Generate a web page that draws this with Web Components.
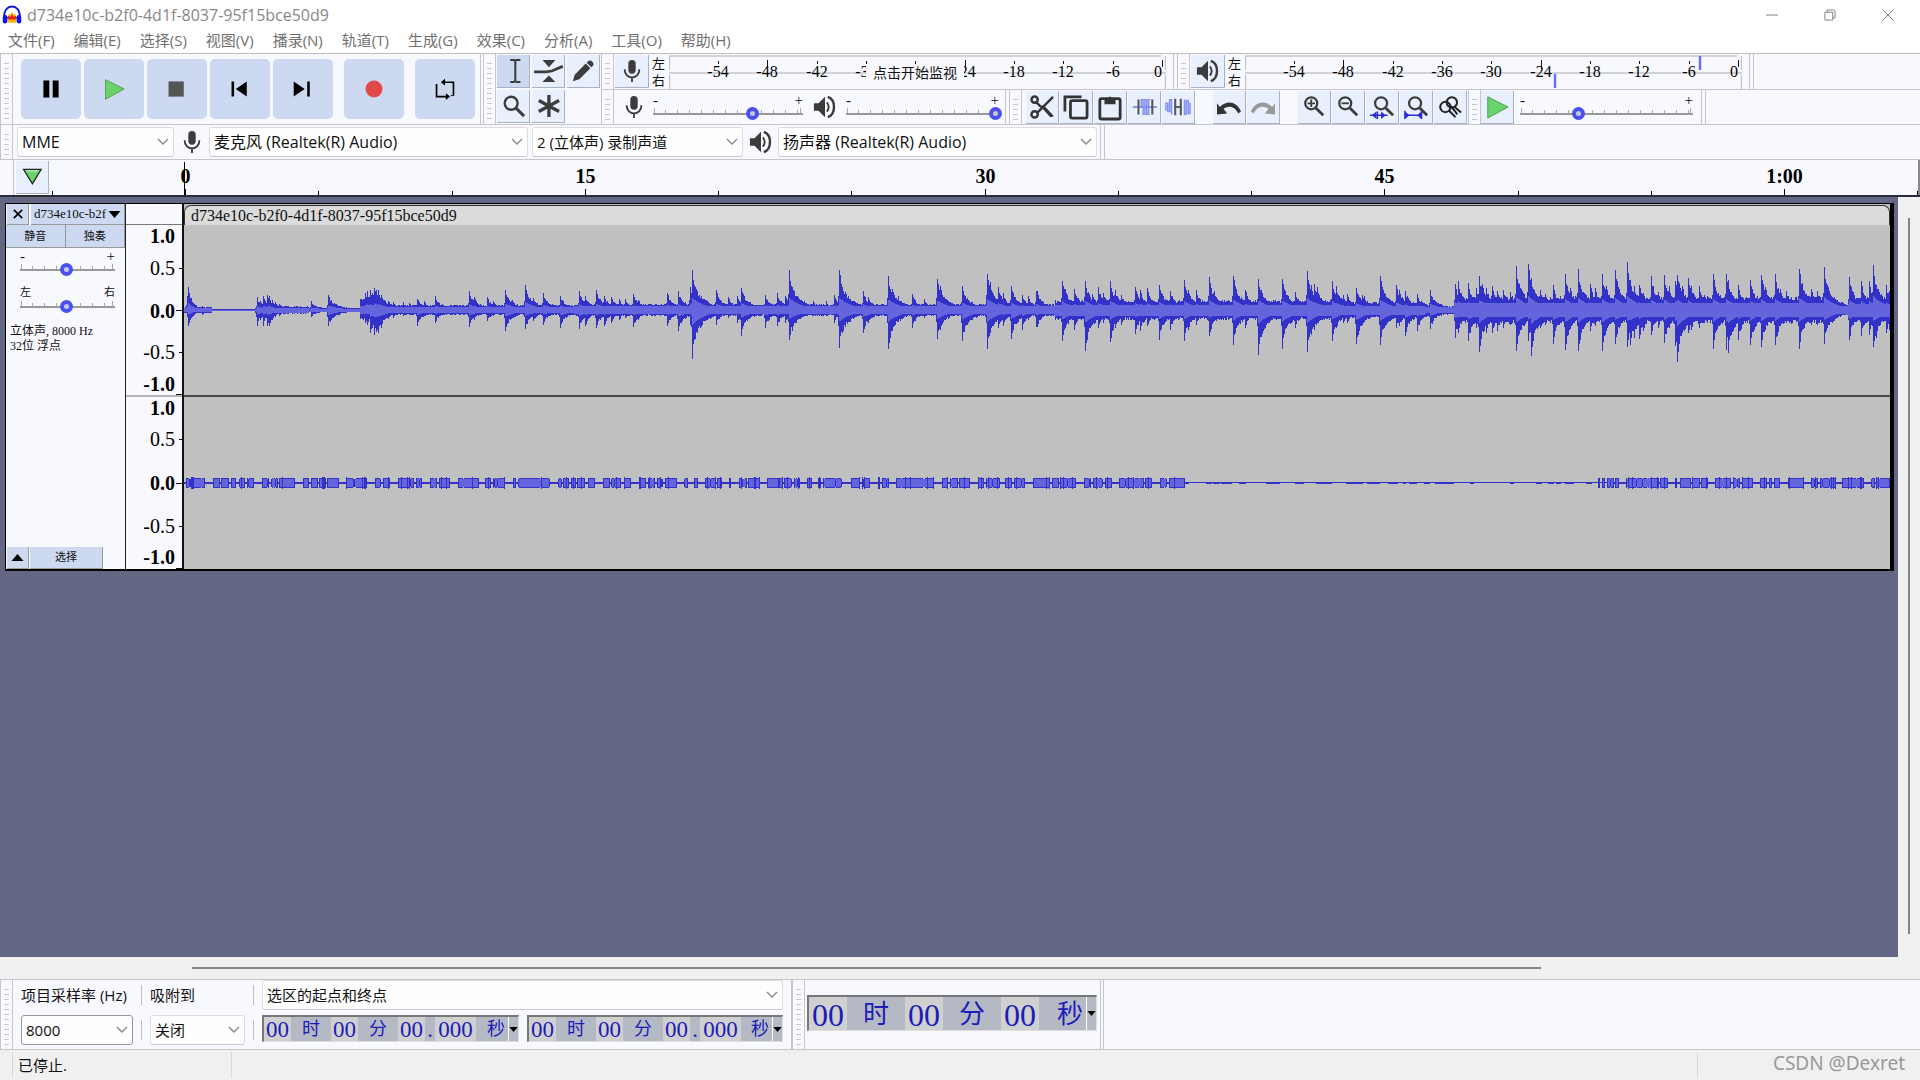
<!DOCTYPE html>
<html lang="zh-CN">
<head>
<meta charset="utf-8">
<title>d734e10c-b2f0-4d1f-8037-95f15bce50d9</title>
<style>
    html, body {
        margin: 0;
        height: 100%;
    }
    body {
        --panel: #f8f8ff;
        --line: #c6c6ca;
        --button: #ccd9f0;
        --ui: "Open Sans", "Noto Sans CJK SC", sans-serif;
        --song: "Liberation Serif", "Noto Sans CJK SC", serif;
        font: 15px/20px var(--ui);
        color: #111;
        overflow: hidden;
    }
</style>
</head>
<body>
<audio-window></audio-window>

<script>
const define = (name, html, setup) => {
    const template = document.createElement('template')
    template.innerHTML = html
    customElements.define(name, class extends HTMLElement {
        constructor() {
            super()
            this.attachShadow({ mode: 'open' })
            this.shadowRoot.appendChild(template.content.cloneNode(true))
        }
        connectedCallback() {
            if (setup) setup(this, this.shadowRoot)
        }
    })
}

const magnifier = '<circle cx="10" cy="9" r="6.5" fill="none" stroke="#3c3c3c" stroke-width="2.4"/><path d="M15 14l8 8" stroke="#3c3c3c" stroke-width="3"/>'

// every icon is drawn on a 26 x 26 grid
const icons = {
    logo: '<path d="M3 17C2 6 8 2 13 2s11 4 10 15" fill="none" stroke="#0a14d8" stroke-width="2.4"/><path d="M7 17l2-6 2 2 2-4 2 4 2-2 2 6-1 6H8z" fill="#ffb400"/><path d="M6 17l3-3 2 2 2-5 2 5 2-2 3 3-3 2H9z" fill="#f02010"/><rect x="1" y="13" width="6" height="11" rx="3" fill="#0a14f0"/><rect x="19" y="13" width="6" height="11" rx="3" fill="#0a14f0"/>',
    pause: '<path d="M4 3h7v20H4zM15 3h7v20h-7z"/>',
    play: '<path d="M3 2l22 11L3 25z" fill="#6bd36b" stroke="#4a9a4a"/>',
    stop: '<path d="M3 4h18v18H3z" fill="#555"/>',
    start: '<path d="M3 4h3v18H3zM21 4v18L8 13z"/>',
    end: '<path d="M18 4h3v18h-3zM2 4v18l13-9z"/>',
    record: '<circle cx="13" cy="13" r="10" fill="#e24848"/>',
    loop: '<path d="M3 7v15h13M10 5h13v16M3 22h4M23 5h-4M16 22h-3" fill="none" stroke="#000" stroke-width="2"/><path d="M8 5l5-4v8zM19 22l-5-4v8zM23 20h-3v2z"/>',
    select: '<path d="M10 1h4l1.5 1L17 1h4M15.500 2v22M10 25h4l1.500-1 1.500 1h4" fill="none" stroke="#3c3c3c" stroke-width="2.2"/>',
    envelope: '<path d="M7 1h14l-7 8zM7 25h14l-7-7z" fill="#3c3c3c"/><path d="M-2 14h13l6-1 12-5" fill="none" stroke="#3c3c3c" stroke-width="3"/>',
    draw: '<path d="M2 24l2-7L16 5l5 5L9 22zM17 4l2-2q1-1 3 0l2 2q1 2 0 3l-2 2z" fill="#3c3c3c"/>',
    zoom: '<circle cx="11" cy="10" r="7" fill="none" stroke="#3c3c3c" stroke-width="2.600"/><path d="M16 15l9 9" stroke="#3c3c3c" stroke-width="3.200"/>',
    multi: '<path d="M14 1v24M3 7l22 12M25 7L3 19" stroke="#3c3c3c" stroke-width="3.6"/>',
    mic: '<rect x="9" y="1" width="8" height="15" rx="4" fill="#3c3c3c"/><path d="M5 11c0 12 16 12 16 0M13 20v5" fill="none" stroke="#3c3c3c" stroke-width="2"/>',
    speaker: '<path d="M1 9h5l7-7v22l-7-7H1z" fill="#3c3c3c"/><path d="M15 8q4 5 0 10" fill="none" stroke="#3c3c3c" stroke-width="2"/><path d="M16 2c9 3 9 19 0 22" fill="none" stroke="#3c3c3c" stroke-width="2.6"/>',
    cut: '<g fill="none" stroke="#333" stroke-width="2.6"><circle cx="5" cy="5" r="3.4"/><circle cx="5" cy="21" r="3.4"/><path d="M7 8l5 5M8 19L25 2" /></g><path d="M11 12l4-1 11 12-4 1z" fill="#333"/>',
    copy: '<path d="M1 18V2h18" fill="none" stroke="#333" stroke-width="3"/><rect x="7" y="6" width="18" height="19" rx="2" fill="none" stroke="#333" stroke-width="3"/>',
    paste: '<rect x="2" y="4" width="22" height="22" rx="2" fill="none" stroke="#333" stroke-width="3"/><path d="M7 4h4q2-5 4 0h4v6H7z" fill="#333"/>',
    trim: '<path d="M1 13h26" stroke="#7f8ff0" stroke-width="2"/><path d="M10 13V5h2v16h2V5h2v16h2V5h2" fill="none" stroke="#8090f0" stroke-width="1.6"/><path d="M7 5v16M22 5v16" stroke="#555" stroke-width="2.2"/>',
    silence: '<path d="M0 17V9h2v9h2V5h2v16M20 5v16h2V6h2v14h2V8" fill="none" stroke="#8090f0" stroke-width="1.6"/><path d="M9 13h8" stroke="#555" stroke-width="2"/><path d="M10 4v18M16 4v18" stroke="#555" stroke-width="2.2"/>',
    undo: '<path d="M0 9l3 4C10 6 21 6 26 18l-3 2C19 12 13 11 7 15l4 5L0 21z" fill="#333"/>',
    redo: '<path d="M26 9l-3 4C16 6 5 6 0 18l3 2c4-8 10-9 16-5l-4 5 11 1z" fill="#999"/>',
    zoomin: magnifier + '<path d="M6 9h8M10 5v8" stroke="#3c3c3c" stroke-width="2"/>',
    zoomout: magnifier + '<path d="M6 9h8" stroke="#3c3c3c" stroke-width="2"/>',
    zoomsel: '<g transform="translate(2)">' + magnifier + '</g><path d="M0 22h19M8 18v8" stroke="#2c2cd0" stroke-width="1.6"/><path d="M2 22l5-4v8zM17 22l-5-4v8z" fill="#2c2cd0"/>',
    zoomfit: '<g transform="translate(2)">' + magnifier + '</g><path d="M1 22h18M1 17v9M19 17v9" stroke="#2c2cd0" stroke-width="1.6"/><path d="M1 18l5 4-5 4zM19 18l-5 4 5 4z" fill="#2c2cd0"/>',
    toggle: '<g fill="none" stroke="#222" stroke-width="2.2"><circle cx="15" cy="8" r="5.6"/><circle cx="8" cy="13" r="5.6"/><path d="M18 13l7 6M12 17l7 7M14 12l7 9"/></g>',
    pin: '<path d="M2 3h23L13.500 22z" fill="#6bd36b" stroke="#222" stroke-width="1.6"/><path d="M6 5h15" stroke="#c5f2c0" stroke-width="1.4"/>',
    close: '<path d="M4 4l18 18M22 4L4 22" stroke="#000" stroke-width="3.6"/>',
    down: '<path d="M1 6h24L13 20z"/>',
    up: '<path d="M1 20h24L13 6z"/>',
    min: '<path d="M0 13h26" stroke="#777" stroke-width="2"/>',
    restore: '<path d="M2 7h17v17H2zM7 7V2h12q5 0 5 5v12h-5" fill="none" stroke="#777" stroke-width="2"/>',
    exit: '<path d="M1 1l24 24M25 1L1 25" stroke="#777" stroke-width="2"/>'
}

define('ui-icon', `
    <style>
        :host { display: block; width: var(--size, 24px); height: var(--size, 24px); flex: none; }
        svg { display: block; width: 100%; height: 100%; overflow: visible; }
    </style>
    <svg viewBox="0 0 26 26" aria-hidden="true"></svg>
`, (host, root) => {
    root.querySelector('svg').innerHTML = icons[host.getAttribute('name')]
})

define('tool-button', `
    <style>
        :host { display: block; width: 33px; height: 33px; flex: none; }
        button {
            display: grid;
            place-content: center;
            width: 100%;
            height: 100%;
            box-sizing: border-box;
            padding: 0;
            border: 0 solid #a9b1c6;
            border-width: 0 1px 1px 0;
            background: #e9f0fd;
        }
        :host([wide]) { width: 34px; }
        :host([pressed]) button { background: var(--button); }
        :host([big]) { width: 60px; height: 60px; --size: 22px; }
        :host([big]) button { border: 0; border-radius: 5px; background: var(--button); }
    </style>
    <button type="button"></button>
`, (host, root) => {
    const button = root.querySelector('button')
    button.innerHTML = `<ui-icon name="${host.getAttribute('icon')}"></ui-icon>`
    button.setAttribute('aria-label', host.getAttribute('label'))
})

define('tool-bar', `
    <style>
        :host {
            display: flex;
            box-sizing: border-box;
            border: 0 solid var(--line);
            border-width: 0 1px;
            background: var(--panel);
        }
        .grip {
            width: 12px;
            flex: none;
            border-right: 1px solid var(--line);
            padding: 5px 3px 4px;
            box-sizing: border-box;
            background: repeating-linear-gradient(transparent 0 4px, #c8c8c8 4px 5px) content-box;
        }
        .body { display: flex; align-items: center; flex: 1; }
    </style>
    <div class="grip"></div>
    <div class="body"><slot></slot></div>
`)

define('level-slider', `
    <style>
        :host { display: block; width: 150px; flex: none; font: 15px/12px var(--song); }
        .ends { display: flex; justify-content: space-between; }
        .track {
            height: 14px;
            background:
                linear-gradient(#999, #999) 0 7px / 100% 2px no-repeat,
                linear-gradient(#aaa, #aaa) 1px 2px / 1px 5px no-repeat,
                linear-gradient(#aaa, #aaa) calc(100% - 2px) 2px / 1px 5px no-repeat,
                repeating-linear-gradient(90deg, transparent 0 11px, #aaa 11px 12px) 1px 4px / 100% 3px no-repeat;
        }
        input {
            appearance: none;
            display: block;
            width: calc(100% + 6px);
            height: 14px;
            margin: 0 -3px;
            background: none;
        }
        input::-webkit-slider-thumb {
            appearance: none;
            width: 13px;
            height: 13px;
            border: 4px solid #4a50ee;
            border-radius: 50%;
            background: #c8c8d8;
            box-sizing: border-box;
        }
    </style>
    <div class="ends"><span id="low"></span><span id="high"></span></div>
    <div class="track"><input type="range"></div>
`, (host, root) => {
    root.getElementById('low').textContent = host.getAttribute('low') || '-'
    root.getElementById('high').textContent = host.getAttribute('high') || '+'
    const input = root.querySelector('input')
    input.value = host.getAttribute('value')
    input.setAttribute('aria-label', host.getAttribute('label'))
})

define('drop-down', `
    <style>
        :host { display: grid; height: 30px; flex: none; align-items: center; }
        select {
            grid-area: 1 / 1;
            appearance: none;
            width: 100%;
            height: 100%;
            box-sizing: border-box;
            border: 1px solid #dcdce0;
            border-bottom-color: #c8c8cc;
            border-radius: 3px;
            background: #fefefe;
            padding: 0 0 1px 4px;
            color: #111;
            font: 15px/20px var(--ui);
        }
        :host([device]) select { font-size: 16px; }
        :host([strong]) select { border-color: #999; }
        svg {
            grid-area: 1 / 1;
            justify-self: end;
            margin-right: 5px;
            pointer-events: none;
        }
    </style>
    <select></select>
    <svg width="12" height="8" viewBox="0 0 12 8" fill="none" stroke="#888" stroke-width="1.4"><path d="M1 1l5 5 5-5"/></svg>
`, (host, root) => {
    const select = root.querySelector('select')
    select.add(new Option(host.getAttribute('value')))
    select.setAttribute('aria-label', host.getAttribute('label'))
})

define('level-meter', `
    <style>
        :host { display: flex; align-items: center; gap: 3px; font: 13px/17px var(--ui); }
        .sides { width: 14px; display: grid; }
        svg { display: block; width: 497px; height: 34px; font: 16px var(--song); }
        .scale { position: relative; }
        .hint {
            display: grid;
            place-items: center;
            width: 98px;
            height: 15px;
            background: var(--panel);
            font: 14px/14px var(--ui);
            position: absolute;
            left: 197px;
            top: 11px;
        }
        .hint:empty { display: none; }
    </style>
    <slot></slot>
    <div class="sides"><span>左</span><span>右</span></div>
    <div class="scale">
        <svg></svg>
        <div class="hint"></div>
    </div>
`, (host, root) => {
    const hint = host.getAttribute('hint') || ''
    let marks = '<path d="M0 1h492M0 18h497M.5 1v14M.5 20v14M496.5 1v14M496.5 20v14" stroke="#c6c6ca" stroke-width="1.4" fill="none"/>'
    for (let db = -54; db <= 0; db += 6) {
        const x = Math.round(493 + db * 8.22)
        marks += `<path d="M${x + .5} ${db % 24 ? 6 : 5}v${db % 24 ? 3 : 7}" stroke="#111"/>`
        // the hint box lies right over -30
        if (hint && db === -30) continue
        marks += `<text x="${db ? x : x - 4}" y="22" text-anchor="middle">${db}</text>`
    }
    if (host.hasAttribute('peaks')) {
        marks += '<path d="M455 1v14M310 19v14" stroke="#6a6aff" stroke-width="2.4"/>'
    }
    root.querySelector('svg').innerHTML = marks
    root.querySelector('.hint').textContent = hint
})

define('title-bar', `
    <style>
        :host { display: flex; align-items: center; gap: 5px; height: 29px; padding: 0 26px 0 2px; background: #fff; color: #888; --size: 20px; }
        h1 { flex: 1; margin: 0; font: 16px/20px var(--ui); }
        .buttons { display: flex; gap: 46px; --size: 12px; }
        button { border: 0; padding: 0; background: none; }
    </style>
    <ui-icon name="logo"></ui-icon>
    <h1>d734e10c-b2f0-4d1f-8037-95f15bce50d9</h1>
    <div class="buttons">
        <button aria-label="最小化"><ui-icon name="min"></ui-icon></button>
        <button aria-label="还原"><ui-icon name="restore"></ui-icon></button>
        <button aria-label="关闭"><ui-icon name="exit"></ui-icon></button>
    </div>
`)

define('menu-bar', `
    <style>
        :host { display: block; height: 24px; background: #fff; border-bottom: 1px solid #bebebe; }
        nav { display: flex; gap: 19px; padding-left: 8px; }
        button { border: 0; padding: 0; background: none; color: #707070; font: 15px/23px var(--ui); white-space: nowrap; }
    </style>
    <nav></nav>
`, (host, root) => {
    const items = ['文件(F)', '编辑(E)', '选择(S)', '视图(V)', '播录(N)', '轨道(T)', '生成(G)', '效果(C)', '分析(A)', '工具(O)', '帮助(H)']
    root.querySelector('nav').innerHTML = items.map(item => `<button>${item}</button>`).join('')
})

define('tool-dock', `
    <style>
        :host { display: block; background: var(--panel); }
        .top { display: flex; height: 71px; border-bottom: 1px solid var(--line); box-sizing: border-box; }
        .transport { padding-right: 5px; margin-right: 2px; }
        .transport tool-button { margin-right: 3px; }
        .transport tool-button:first-child { margin-left: 8px; }
        .transport tool-button[gap] { margin-left: 8px; }
        .transport tool-button:last-child { margin-right: 0; }
        .tools { border-right: 0; }
        .grid { display: grid; grid-template-columns: repeat(3, 33px); gap: 2px; padding: 0 1px; }
        .rows { display: grid; grid-template-rows: 35px 35px; flex: 1; }
        .row { display: flex; gap: 3px; }
        .row + .row { border-top: 1px solid var(--line); }
        .meter { padding-right: 7px; }
        level-meter { margin-left: 1px; }
        .mixer { padding-right: 6px; }
        .pad { display: grid; place-items: center; width: 39px; }
        .pad.wide { width: 43px; }
        .edit-bar { border-right: 0; }
        .edit { gap: 1px; display: flex; padding-left: 4px; }
        .edit [gap] { margin-left: 17px; }
        .second { width: 153px; }
        .speed { padding-right: 8px; margin-left: -2px; }
        .speed level-slider { width: 173px; margin-left: 6px; }
        .rest { border-left: 1px solid var(--line); flex: 1; }
        .devices { display: flex; gap: 3px; height: 34px; border-bottom: 1px solid var(--line); }
        .devices .icon { display: grid; place-items: center; width: 35px; }
        .mme { width: 157px; margin-left: 4px; }
        .input { width: 319px; }
        .channels { width: 211px; margin-left: 4px; }
        .output { width: 319px; margin-right: 3px; }
    </style>
    <div class="top">
        <tool-bar class="transport">
            <tool-button big icon="pause" label="暂停"></tool-button>
            <tool-button big icon="play" label="播放"></tool-button>
            <tool-button big icon="stop" label="停止"></tool-button>
            <tool-button big icon="start" label="跳至开头"></tool-button>
            <tool-button big icon="end" label="跳至结尾"></tool-button>
            <tool-button big gap icon="record" label="录制"></tool-button>
            <tool-button big gap icon="loop" label="循环"></tool-button>
        </tool-bar>
        <tool-bar class="tools">
            <div class="grid">
                <tool-button pressed icon="select" label="选择工具"></tool-button>
                <tool-button icon="envelope" label="包络工具"></tool-button>
                <tool-button icon="draw" label="绘制工具"></tool-button>
                <tool-button icon="zoom" label="缩放工具"></tool-button>
                <tool-button icon="multi" label="多功能工具"></tool-button>
            </div>
        </tool-bar>
        <div class="rows">
            <div class="row">
                <tool-bar class="meter">
                    <level-meter hint="点击开始监视"><tool-button wide icon="mic" label="录制电平"></tool-button></level-meter>
                </tool-bar>
                <tool-bar class="meter">
                    <level-meter peaks><tool-button wide icon="speaker" label="播放电平"></tool-button></level-meter>
                </tool-bar>
                <div class="rest"></div>
            </div>
            <div class="row">
                <tool-bar class="mixer">
                    <div class="pad"><ui-icon name="mic"></ui-icon></div>
                    <level-slider value="67" label="录制音量"></level-slider>
                    <div class="pad wide"><ui-icon name="speaker"></ui-icon></div>
                    <level-slider class="second" value="100" label="播放音量"></level-slider>
                </tool-bar>
                <tool-bar class="edit-bar">
                    <div class="edit">
                        <tool-button icon="cut" label="剪切"></tool-button>
                        <tool-button icon="copy" label="复制"></tool-button>
                        <tool-button icon="paste" label="粘贴"></tool-button>
                        <tool-button icon="trim" label="修剪"></tool-button>
                        <tool-button icon="silence" label="静音"></tool-button>
                        <tool-button gap icon="undo" label="撤销"></tool-button>
                        <tool-button icon="redo" label="重做"></tool-button>
                        <tool-button gap icon="zoomin" label="放大"></tool-button>
                        <tool-button icon="zoomout" label="缩小"></tool-button>
                        <tool-button icon="zoomsel" label="缩放到选区"></tool-button>
                        <tool-button icon="zoomfit" label="缩放到项目"></tool-button>
                        <tool-button icon="toggle" label="切换缩放"></tool-button>
                    </div>
                </tool-bar>
                <tool-bar class="speed">
                    <tool-button icon="play" label="以指定速度播放"></tool-button>
                    <level-slider value="33" label="播放速度"></level-slider>
                </tool-bar>
                <div class="rest"></div>
            </div>
        </div>
    </div>
    <div class="devices">
        <tool-bar>
            <drop-down device class="mme" value="MME" label="音频主机"></drop-down>
            <div class="icon"><ui-icon name="mic"></ui-icon></div>
            <drop-down device class="input" value="麦克风 (Realtek(R) Audio)" label="录制设备"></drop-down>
            <drop-down class="channels" value="2 (立体声) 录制声道" label="录制声道"></drop-down>
            <div class="icon"><ui-icon name="speaker"></ui-icon></div>
            <drop-down device class="output" value="扬声器 (Realtek(R) Audio)" label="播放设备"></drop-down>
        </tool-bar>
        <div class="rest"></div>
    </div>
`)

define('time-ruler', `
    <style>
        :host { display: flex; height: 35px; background: var(--panel); border-bottom: 2px solid #2b2c38; }
        .gap { width: 13px; border-right: 1px solid var(--line); }
        .pin { margin: 1px 0 0 2px; --size: 20px; }
        svg { flex: 1; min-width: 0; height: 35px; font: bold 20px var(--song); border-right: 2px solid #888; }
    </style>
    <div class="gap"></div>
    <tool-button class="pin" icon="pin" label="固定播放头"></tool-button>
    <svg></svg>
`, (host, root) => {
    // the svg starts 49px from the window edge, second 0 is at 185px
    const names = { 0: '0', 15: '15', 30: '30', 45: '45', 60: '1:00' }
    let marks = '<path d="M135.5 2v33" stroke="#000"/>'
    for (let s = -5; s <= 65; s += 5) {
        const x = Math.round(136 + s * 26.65) + .5
        marks += `<path d="M${x} ${s in names ? 29 : 31}v6" stroke="#000"/>`
        if (s in names) marks += `<text x="${x}" y="23" text-anchor="middle">${names[s]}</text>`
    }
    root.querySelector('svg').innerHTML = marks
})

define('track-panel', `
    <style>
        :host { display: flex; flex-direction: column; background: var(--panel); border-right: 1px solid #222; font: 12px/15px var(--song); }
        button {
            border: 0 solid #999;
            border-width: 0 1px 1px 0;
            padding: 0;
            background: var(--button);
            color: #111;
            font: 11px/15px var(--song);
            display: flex;
            align-items: center;
            justify-content: center;
            gap: 2px;
            box-sizing: border-box;
        }
        .row { display: grid; height: 21px; }
        .name { grid-template-columns: 22px 1fr; gap: 2px; --size: 12px; margin-left: 1px; }
        .name ui-icon[name=down] { --size: 13px; }
        .name button { font: 13px/16px var(--song); }
        .mute { grid-template-columns: 1fr 1fr; height: 23px; }
        level-slider { width: 95px; margin: 2px 0 0 14px; }
        .pan { font: 11px/14px var(--song); margin-top: 9px; }
        p { margin: 11px 0 0 4px; }
        .foot { margin-top: auto; grid-template-columns: 22px 73px; gap: 1px; height: 22px; --size: 13px; margin-left: 1px; }
    </style>
    <div class="row name">
        <button aria-label="关闭轨道"><ui-icon name="close"></ui-icon></button>
        <button>d734e10c-b2f<ui-icon name="down"></ui-icon></button>
    </div>
    <div class="row mute"><button>静音</button><button>独奏</button></div>
    <level-slider value="49" label="增益"></level-slider>
    <level-slider class="pan" value="49" low="左" high="右" label="声像"></level-slider>
    <p>立体声, 8000 Hz<br>32位 浮点</p>
    <div class="row foot">
        <button aria-label="折叠"><ui-icon name="up"></ui-icon></button>
        <button>选择</button>
    </div>
`)

define('amplitude-ruler', `
    <style>
        :host { display: block; background: var(--panel); border-right: 2px solid #111; }
        svg { display: block; width: 56px; height: 365px; overflow: visible; font: 20px var(--song); }
        .b { font-weight: bold; }
    </style>
    <svg></svg>
`, (host, root) => {
    const marks = [['1.0', 32, 0], ['0.5', 64, 64], ['0.0', 107, 106], ['-0.5', 148, 148], ['-1.0', 180, 190],
        ['1.0', 204, 0], ['0.5', 235, 235], ['0.0', 279, 279], ['-0.5', 322, 322], ['-1.0', 353, 364]]
    root.querySelector('svg').innerHTML = '<path d="M0 20.5h56M0 192h56" stroke="#777"/>' + marks.map(([label, y, tick]) => {
        const half = label.endsWith('5')
        return `<text class="${half ? '' : 'b'}" x="49" y="${y + 7}" text-anchor="end">${label}</text>` +
            (tick ? `<path d="M${half ? 53 : 50} ${tick + .5}H56" stroke="#111"/>` : '')
    }).join('')
})

// Peaks are [x, top, bottom] triples on a fine grid: x is divided by the rate
// of its chunk, heights are in thirds of a pixel round the zero line at 331.
const music = [
    { from: -5, rate: 2.613, peaks: [[20,290,350],[24,262,380],[60,318,345],[205,293,380],[212,305,360],[220,290,378],[230,287,380],[236,290,378],[244,300,362],[252,308,352],[260,312,350],[300,318,342],[345,305,352],[390,286,380],[396,302,350],[420,318,343],
        [485,280,370],[490,275,375],[498,272,400],[504,280,385],[510,264,405],[515,272,398],[520,270,400],[527,285,385],[535,300,362],[545,304,358],[560,308,355],[585,308,350],[600,310,345],[622,297,380],[640,305,350],[668,290,370],[757,275,382],[770,292,360],[805,292,365],[820,303,350],[852,270,395],[870,300,352],
        [905,255,388],[925,295,365],[950,280,375],[995,290,385],[1045,275,388],[1060,290,380],[1090,270,385],[1110,288,378],[1130,292,370],[1150,299,360],[1165,299,355],[1185,283,382],[1200,300,360],[1275,280,380],
        [1305,275,395],[1334,262,375],[1340,210,477],[1346,255,420],[1352,268,370],[1365,290,350],[1402,270,375],[1435,293,355],[1458,290,370],[1468,264,408],[1530,285,385],[1562,280,380]] },
    { from: 595, rate: 2.613, peaks: [[15,290,370],[27,210,420],[35,265,395],[45,290,370],[90,305,350],[124,305,350],[145,285,370],[157,210,445],[165,262,370],[180,290,350],[220,275,400],[232,292,370],[285,228,447],[295,268,370],[310,290,350],[348,282,385],[380,297,355],
        [412,237,418],[420,260,390],[477,260,425],[490,295,360],[543,222,447],[552,248,395],[573,262,385],[585,280,380],[606,260,417],[636,285,390],[650,290,360],[671,275,382],[737,245,425],[745,268,385],[768,267,390],
        [798,243,455],[815,284,375],[832,262,385],[845,280,370],[863,243,428],[875,270,385],[890,285,375],[927,262,403],[940,270,395],[960,265,380],[990,255,420],[1020,275,390],[1056,240,425],[1065,270,390],[1087,270,375],
        [1121,233,410],[1135,275,365],[1183,228,435],[1190,258,400],[1216,270,385],[1248,237,465],[1258,270,385],[1312,237,447],[1320,275,375],[1345,278,385],[1377,213,458],[1388,255,405],[1395,252,390],[1402,262,370],[1443,245,425],
        [1452,258,385],[1470,285,370],[1504,264,432],[1520,287,370]] },
    { from: 1155, rate: 2.703, peaks: [[18,284,370],[43,265,432],[65,290,360],[107,230,437],[117,270,375],[152,255,385],[160,270,380],[175,275,410],[208,283,393],[243,270,387],[310,252,415],[320,245,400],[345,250,425],
        [368,265,385],[377,230,458],[385,252,395],[395,265,400],[410,260,400],[425,275,395],[440,270,385],[460,278,375],[477,198,455],[507,193,425],[517,235,470],[540,270,385],[555,284,375],[575,255,432],[609,222,452],[622,265,385],[643,207,455],[675,252,395],[690,265,380],
        [709,222,455],[720,260,385],[742,210,432],[776,188,443],[784,240,435],[795,258,415],[808,255,418],[820,280,395],[840,230,405],[860,278,385],[876,227,430],[890,260,385],[905,245,440],[910,227,487],[917,250,430],[925,260,400],[940,235,400],[950,258,390],[970,258,385],
        [985,285,370],[1009,222,447],[1043,222,450],[1048,240,460],[1076,257,420],[1107,242,437],[1139,225,443],[1148,262,385],[1176,222,437],[1190,268,375],[1205,275,370],[1240,207,447],[1250,250,390],[1273,267,375],[1290,275,375],[1309,203,432],
        [1318,262,370],[1375,233,420],[1408,245,410],[1430,245,405],[1440,195,443],[1450,255,415],[1475,257,400],[1484,275,390]] }
]

// loud runs and faint dashes of the second channel, as start and end pairs
const speech = [
    { from: -5, rate: 2.613, runs: [17,68,88,107,111,131,135,150,157,172,177,195,216,235,240,258,262,302,323,340,344,362,366,384,388,417,437,492,512,528,533,551,572,614,618,636,657,675,680,708,729,783,800,815,820,852,873,880,886,970,
        990,1000,1003,1018,1025,1037,1041,1062,1069,1087,1107,1125,1130,1155,1163,1182,1202,1220,1225,1243,1248,1265,1270,1300,1320,1330,1346,1355,1375,1403,1407,1418,1437,1443,1463,1483,1487,1518,1537,1568], dashes: [] },
    { from: 595, rate: 2.613, runs: [0,10,14,35,38,55,72,85,102,110,115,165,187,212,218,238,258,264,268,287,307,405,425,442,447,467,470,500,519,535,540,577,591,610,613,642,664,706,710,728,732,774,794,812,817,845,848,868,885,950,954,973,992,1012,1016,1058],
        dashes: [1058,1071,1115,1130,1133,1150,1153,1182,1200,1218,1272,1308,1346,1371,1402,1443,1480,1525,1536,1568] },
    { from: 1155, rate: 2.703, runs: [698,703,708,716,722,740,744,754,774,862,866,886,906,912,920,948,952,972,976,994,1014,1057,1061,1082,1086,1115,1135,1154,1160,1168,1173,1190,1210,1253,1273,1292,1297,1342,1358,1416,1436,1445,1450,1487],
        dashes: [17,63,75,107,130,158,172,180,187,208,227,245,257,310,352,364,460,472,530,546,562,578,585,597,609,634,666,681] }
]

const WIDTH = 1705
let seed = 7
const random = () => (seed = seed * 16807 % 2147483647) / 2147483647

function bars(values, mid) {
    return values.map(([up, down], x) => `M${x} ${(mid - up).toFixed(1)}h1V${(mid + down).toFixed(1)}h-1z`).join('')
}

// quiet level by position: [until x, peak, rms]
const floors = [[28, 3, 2], [73, 1, .5], [125, 3.5, 2.5], [176, 2, 1.5], [195, 10, 4], [390, 4.5, 3], [870, 5.5, 4], [1150, 9, 5.5], [1240, 7, 4.5], [1269, 4, 3], [1640, 12, 7], [1663, 5, 4], [WIDTH, 11, 6.5]]

function drawMusic() {
    const peak = [], rms = []
    for (let x = 0; x < WIDTH; x++) {
        const [, high, low] = floors.find(([until]) => x < until)
        peak.push([high * (.8 + random() * .35), high * (.8 + random() * .35)])
        rms.push([low, low])
    }
    for (const { from, rate, peaks } of music) {
        for (const [px, top, bottom] of peaks) {
            const at = Math.round(from + px / rate)
            const amps = [(331 - top) / 3, (bottom - 331) / 3]
            const length = at < 125 ? 7 : 14
            for (let x = Math.max(0, at - 3); x < Math.min(WIDTH, at + 40); x++) {
                const d = x - at
                const fast = d < 0 ? Math.exp(d * 1.1) : Math.exp(-d / 2)
                const slow = d < 0 ? Math.exp(d / 1.2) : Math.exp(-d / length)
                for (const side of [0, 1]) {
                    const amp = amps[side]
                    const v = d === 0 ? amp : amp * (.4 * fast + .6 * slow) * (.85 + random() * .25)
                    peak[x][side] = Math.max(peak[x][side], v)
                    rms[x][side] = Math.max(rms[x][side], amp * .3 * slow)
                }
            }
        }
    }
    return `<path fill="#3232c8" d="${bars(peak, 85)}"/><path fill="#6464dc" d="${bars(rms, 85)}"/>`
}

function drawSpeech() {
    let dark = `M0 85h${WIDTH}v1H0z`, light = ''
    for (const { from, rate, runs, dashes } of speech) {
        for (let i = 0; i < dashes.length; i += 2) {
            dark += `M${from + dashes[i] / rate} 85H${from + dashes[i + 1] / rate}v2H${from + dashes[i] / rate}z`
        }
        for (let i = 0; i < runs.length; i += 2) {
            const start = Math.round(from + runs[i] / rate), end = Math.round(from + runs[i + 1] / rate)
            for (let x = start; x < end; x++) {
                const r = random()
                const h = r > .9 ? 6 : r > .82 ? 4 : 5
                dark += `M${x} ${86 - h}h1v${h * 2}h-1z`
                if (x > start && x < end - 1 && r < .86) light += `M${x} 82h1v8h-1z`
            }
        }
        if (from < 1000) dark += `M${Math.max(0, from)} 85H${from < 0 ? 595 : 1000}v2H${Math.max(0, from)}z`
    }
    dark += `M1422 85H${WIDTH}v2H1422z`
    return `<path fill="#3232c8" d="${dark}"/><path fill="#6464dc" d="${light}"/>`
}

define('audio-clip', `
    <style>
        :host { display: block; min-width: 0; background: #c0c0c0; border-right: 4px solid #000; }
        header {
            height: 20px;
            box-sizing: border-box;
            border: 1px solid #333;
            border-bottom: 0;
            border-radius: 7px 7px 0 0;
            background: #dbdbdb;
            padding-left: 6px;
            font: 16px/20px var(--song);
            margin-top: 1px;
        }
        svg { display: block; width: 100%; height: 170px; }
        #speech { height: 172px; border-top: 2px solid #4a4a4a; }
    </style>
    <header>d734e10c-b2f0-4d1f-8037-95f15bce50d9</header>
    <svg id="music" viewBox="0 0 1705 170" preserveAspectRatio="none" shape-rendering="crispEdges"></svg>
    <svg id="speech" viewBox="0 0 1705 172" preserveAspectRatio="none" shape-rendering="crispEdges"></svg>
`, (host, root) => {
    root.getElementById('music').innerHTML = drawMusic()
    root.getElementById('speech').innerHTML = drawSpeech()
})

define('track-area', `
    <style>
        :host { display: grid; grid-template: 1fr 22px / 1fr 22px; flex: 1; min-height: 0; background: #f0f0f0; }
        .tracks { background: #646784; padding: 6px 4px 0 5px; min-width: 0; }
        .track {
            display: grid;
            grid-template-columns: 120px 58px 1fr;
            border: 1px solid #000;
            border-width: 1px 0 2px 1px;
            height: 365px;
        }
        .vertical { padding: 21px 0 23px 10px; }
        .vertical div { width: 2px; height: 100%; background: #868686; }
        .horizontal { padding: 10px 357px 0 192px; }
        .horizontal div { height: 2px; background: #868686; }
    </style>
    <div class="tracks">
        <div class="track">
            <track-panel></track-panel>
            <amplitude-ruler></amplitude-ruler>
            <audio-clip></audio-clip>
        </div>
    </div>
    <div class="vertical"><div></div></div>
    <div class="horizontal"><div></div></div>
`)

define('time-field', `
    <style>
        :host {
            display: flex;
            height: 27px;
            box-sizing: border-box;
            border: 1px solid #ddd;
            border-width: 2px 1px 1px 2px;
            border-top-color: #777;
            border-left-color: #777;
            background: #b4b9c4;
            color: #1c1cb8;
            font: 23px/25px var(--song);
            --digit: 27px;
            --unit: 40px;
        }
        .cells { display: flex; flex: 1; }
        .cells span { text-align: center; width: var(--unit); }
        .cells .n { width: var(--digit); background: #d0d0d0; }
        .cells .long { width: 41px; }
        .cells .dot { width: 10px; }
        .cells .u { font-size: 18px; }
        .cells span:last-child { width: auto; flex: 1; text-align: right; padding-right: 3px; }
        button { width: 10px; padding: 0; border: 0; border-left: 1px solid #fff; background: #b4b9c4; display: grid; place-content: center; --size: 9px; }
        :host([big]) { height: 36px; font: 32px/36px var(--song); --digit: 38px; --unit: 58px; }
        :host([big]) .u { font-size: 26px; }
    </style>
    <div class="cells"></div>
    <button aria-label="格式"><ui-icon name="down"></ui-icon></button>
`, (host, root) => {
    const parts = host.hasAttribute('big') ? ['00', '时', '00', '分', '00', '秒'] : ['00', '时', '00', '分', '00', '.', '000', '秒']
    root.querySelector('.cells').innerHTML = parts.map(part => {
        const kind = part === '000' ? 'n long' : part === '00' ? 'n' : part === '.' ? 'dot' : 'u'
        return `<span class="${kind}">${part}</span>`
    }).join('')
})

define('selection-dock', `
    <style>
        :host { display: flex; height: 69px; border: 1px solid var(--line); border-width: 1px 0; background: var(--panel); }
        .main { padding-right: 8px; }
        .cols {
            display: grid;
            grid-template: 30px 30px / 112px 1px 95px 1px 257px 256px;
            column-gap: 8px;
            row-gap: 5px;
            padding-left: 8px;
            align-items: center;
            align-self: start;
        }
        .cols i { height: 20px; background: #c0c0c4; }
        .mode { grid-column: 5 / 7; }
        .cols span { white-space: nowrap; }
        .cols time-field { align-self: start; }
        .big { padding-right: 3px; }
        .big time-field { width: 290px; margin: 0 0 4px 2px; }
        .rest { margin-left: 2px; border-left: 1px solid var(--line); }
    </style>
    <tool-bar class="main">
        <div class="cols">
            <span>项目采样率 (Hz)</span><i></i><span>吸附到</span><i></i>
            <drop-down class="mode" value="选区的起点和终点" label="选区模式"></drop-down>
            <drop-down strong value="8000" label="项目采样率 (Hz)"></drop-down><i></i>
            <drop-down value="关闭" label="吸附到"></drop-down><i></i>
            <time-field></time-field>
            <time-field></time-field>
        </div>
    </tool-bar>
    <tool-bar class="big"><time-field big></time-field></tool-bar>
    <div class="rest"></div>
`)

define('status-bar', `
    <style>
        :host { display: flex; align-items: center; height: 30px; background: #f0f0f0; }
        div { height: 26px; line-height: 26px; border-left: 1px solid #d8d8d8; box-sizing: border-box; }
        .state { width: 219px; margin-left: 12px; padding-left: 5px; }
        .info { flex: 1; }
        .mark { width: 223px; padding-right: 15px; text-align: right; font: 19px/23px "Noto Sans", sans-serif; color: #999; }
    </style>
    <div class="state">已停止.</div>
    <div class="info"></div>
    <div class="mark">CSDN @Dexret</div>
`)

define('audio-window', `
    <style>
        :host { display: flex; flex-direction: column; height: 100vh; }
        title-bar, menu-bar, tool-dock, time-ruler, selection-dock, status-bar { flex: none; }
    </style>
    <title-bar></title-bar>
    <menu-bar></menu-bar>
    <tool-dock></tool-dock>
    <time-ruler></time-ruler>
    <track-area></track-area>
    <selection-dock></selection-dock>
    <status-bar></status-bar>
`)
</script>
</body>
</html>
